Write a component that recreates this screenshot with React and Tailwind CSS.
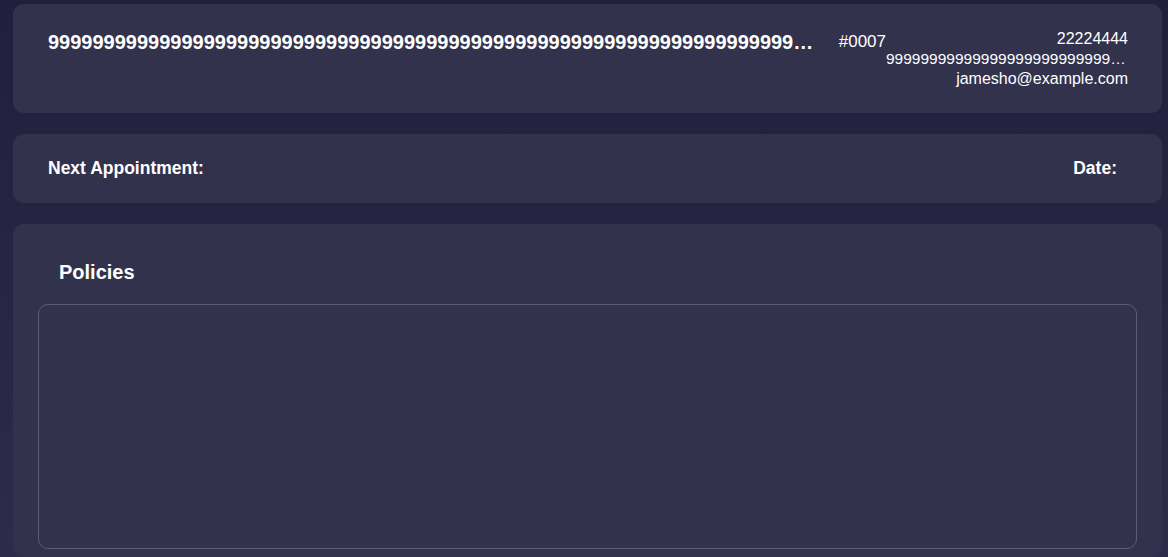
import React from 'react';

const Card = ({ className = '', children }) => (
  <div className={`bg-[#32324d] rounded-[11px] ${className}`}>{children}</div>
);

const App = () => {
  const title = '9'.repeat(90);
  const phone2 = '9'.repeat(40);

  return (
    <div className="min-h-screen bg-linear-to-b from-[#20203c] to-[#2d2d4b] pl-[13px] pr-[6px] pt-[4px] pb-4 text-white font-['Liberation_Sans',Arial,sans-serif] flex flex-col gap-[21px]">
      <Card className="h-[109px] pl-[35px] pr-[34px] pt-[24px] flex items-start">
        <div className="flex-1 min-w-0 flex items-start gap-[18px]">
          <h2 className="min-w-0 truncate text-[20px] leading-7 font-bold">{title}</h2>
          <span className="shrink-0 text-[17px] leading-7">#0007</span>
        </div>
        <div className="w-[242px] shrink-0 text-right text-[16px] leading-5 pt-[1px]">
          <div>22224444</div>
          <div className="truncate text-[15.5px]">{phone2}</div>
          <div>jamesho@example.com</div>
        </div>
      </Card>

      <Card className="h-[69px] pl-[35px] pr-[45px] flex items-center justify-between text-[17.5px] font-bold">
        <span>Next Appointment:</span>
        <span>Date:</span>
      </Card>

      <Card className="px-[25px] pt-[34px] pb-[8px] flex flex-col">
        <h3 className="pl-[21px] text-[20px] leading-7 font-bold">Policies</h3>
        <div className="mt-[18px] h-[245px] rounded-[10px] border border-[#5c5c72]"></div>
      </Card>
    </div>
  );
};

export default App;
